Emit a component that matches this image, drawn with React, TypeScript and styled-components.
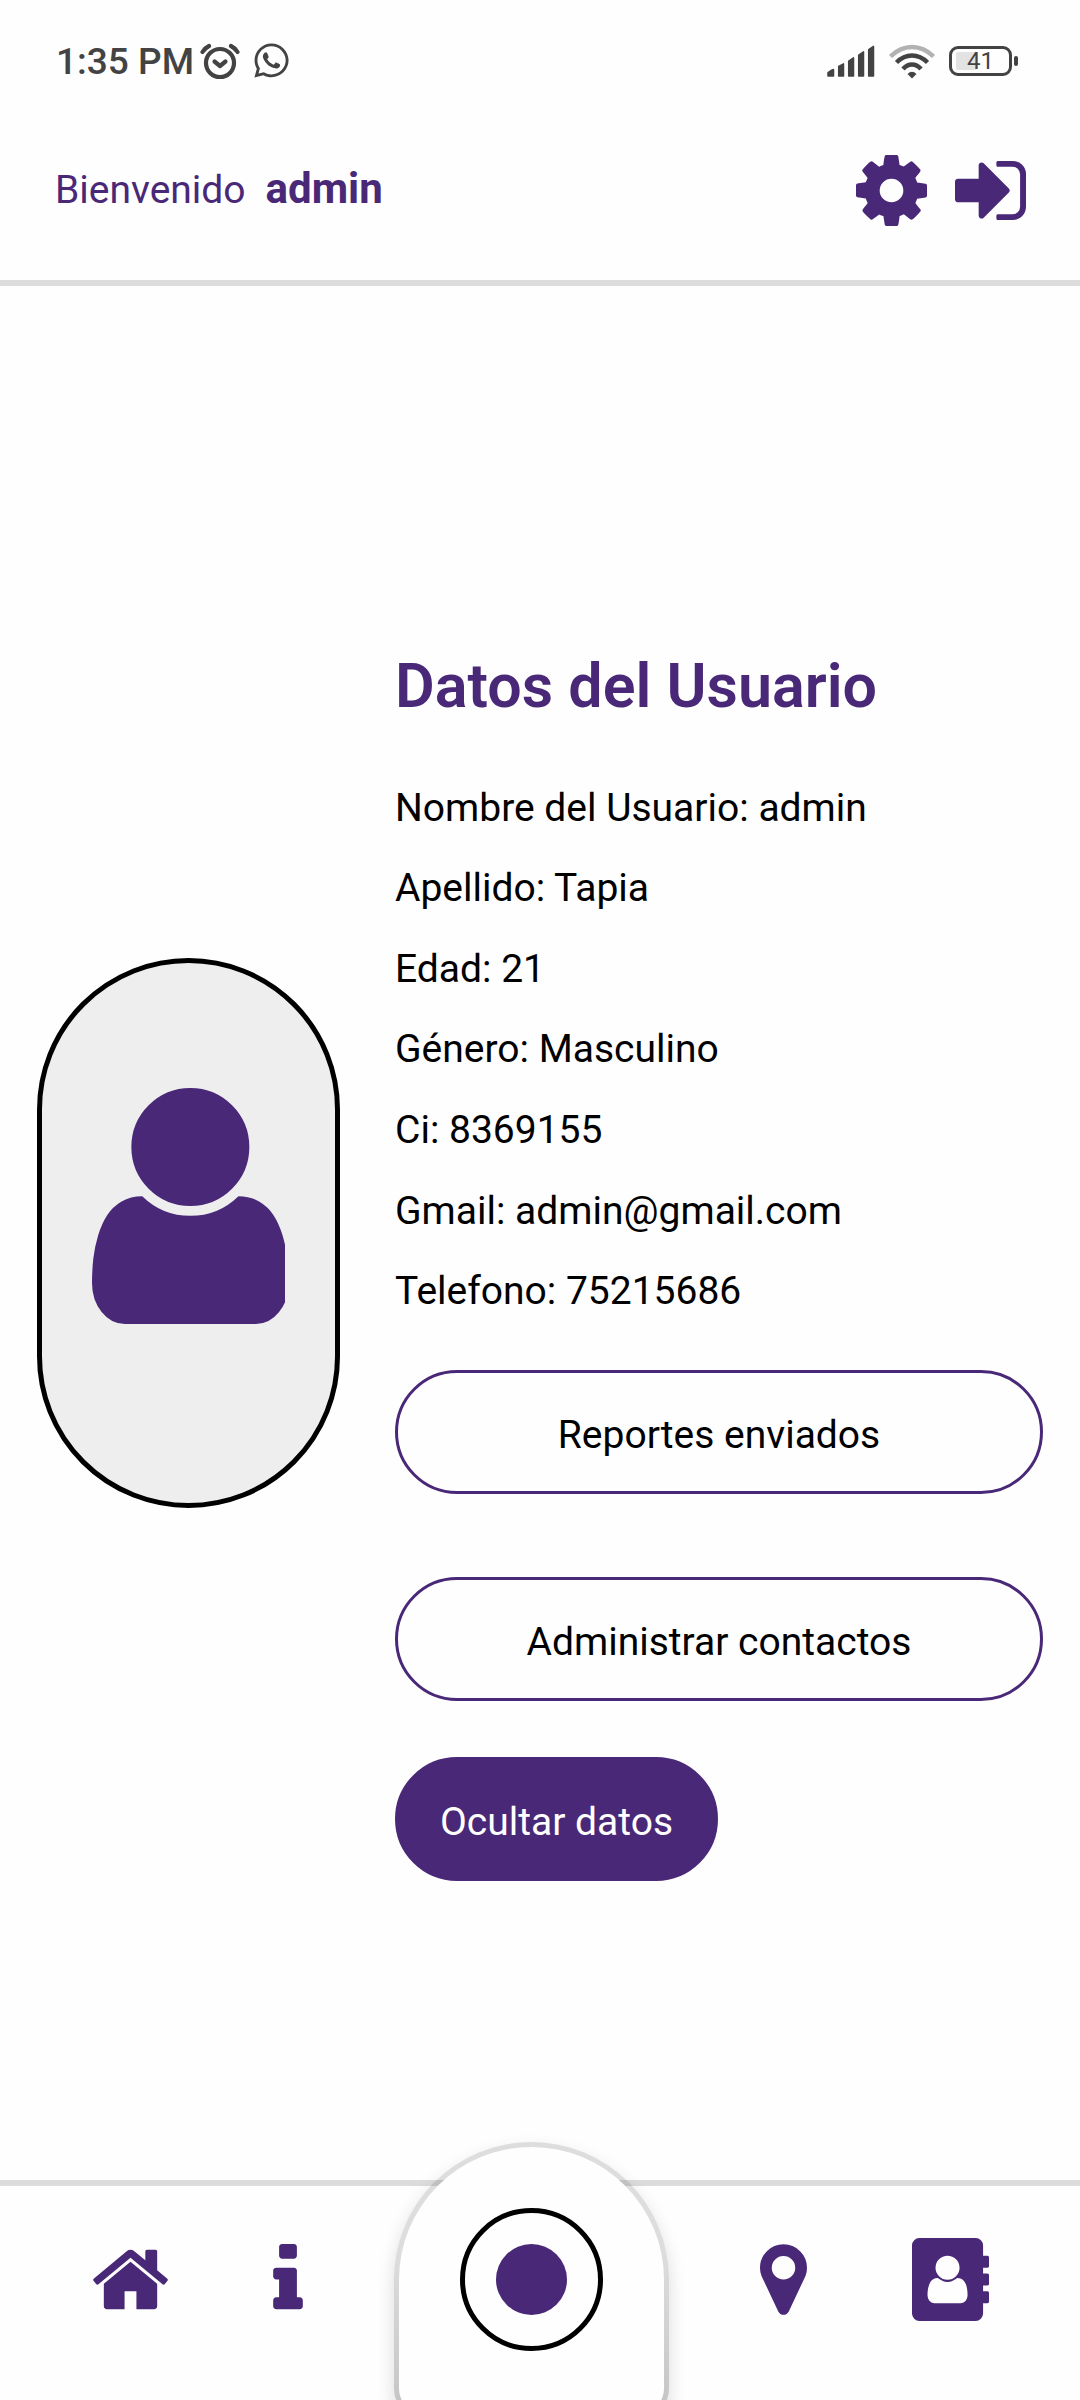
import React from "react";
import styled, { createGlobalStyle } from "styled-components";
import { FaWhatsapp } from "react-icons/fa";

const PURPLE = "#4a2878";
const STATUS = "#434343";
const LINE = "#dcdcdc";

const GlobalStyle = createGlobalStyle`
  *, *::before, *::after { box-sizing: border-box; }
  body {
    margin: 0;
    background: #fefefe;
    font-family: Roboto, "Liberation Sans", sans-serif;
    color: #000;
  }
`;

const Screen = styled.div`
  min-height: 100vh;
  display: flex;
  flex-direction: column;
  overflow: hidden;
`;

const StatusBar = styled.div`
  display: flex;
  align-items: center;
  justify-content: space-between;
  height: 101px;
  padding: 20px 62px 0 56px;
  color: ${STATUS};
`;

const StatusGroup = styled.div<{ $gap: number }>`
  display: flex;
  align-items: center;
  gap: ${(p) => p.$gap}px;

  svg { display: block; }
`;

const Clock = styled.span`
  font-size: 37px;
  font-weight: 500;
  line-height: 40px;
  padding-top: 3px;
  margin-right: -6px;
`;

const Battery = styled.div`
  display: flex;
  align-items: center;
  gap: 2px;

  &::after {
    content: "";
    width: 4px;
    height: 10px;
    border-radius: 2px;
    background: ${STATUS};
  }
`;

const BatteryBody = styled.div<{ $level: number }>`
  width: 63px;
  height: 30px;
  padding: 3px 4px;
  border: 3px solid ${STATUS};
  border-radius: 9px;
  background: linear-gradient(#e3e3e3, #e3e3e3) content-box left / ${(p) => p.$level}% 100% no-repeat;
  font-size: 24px;
  line-height: 19px;
  text-align: center;
`;

const Header = styled.header`
  display: flex;
  align-items: center;
  justify-content: space-between;
  height: 185px;
  padding: 0 54px 0 55px;
  border-bottom: 6px solid ${LINE};
  color: ${PURPLE};
`;

const Greeting = styled.p`
  display: flex;
  align-items: baseline;
  gap: 20px;
  margin: 0;
  padding-bottom: 2px;
  font-size: 39px;
  line-height: 48px;
`;

const UserName = styled.strong`
  font-size: 42px;
  font-weight: 700;
`;

const HeaderActions = styled.div`
  display: flex;
  gap: 28px;
`;

const IconButton = styled.button`
  display: flex;
  padding: 0;
  border: 0;
  background: none;
  color: ${PURPLE};
  cursor: pointer;
`;

const Main = styled.main`
  flex: 1;
  display: flex;
  align-items: center;
  gap: 55px;
  padding: 0 37px;
`;

const Avatar = styled.div`
  flex: 0 0 303px;
  height: 550px;
  padding: 125px 0 0 50px;
  border: 5px solid #000;
  border-radius: 152px;
  background: #eee;
  color: ${PURPLE};

  svg { display: block; }
`;

const Profile = styled.section`
  flex: 1;
  display: flex;
  flex-direction: column;
  align-items: flex-start;
  padding-top: 64px;
`;

const Title = styled.h1`
  margin: 0 0 46px;
  font-size: 61px;
  font-weight: 600;
  line-height: 72px;
  color: ${PURPLE};
`;

const DataList = styled.ul`
  display: grid;
  grid-auto-rows: 1fr;
  align-items: center;
  min-height: 564px;
  margin: 0 0 38px;
  padding: 0;
  list-style: none;
  font-size: 39px;
  line-height: 48px;
`;

const PillButton = styled.button<{ $filled?: boolean }>`
  align-self: ${(p) => (p.$filled ? "flex-start" : "stretch")};
  height: 124px;
  padding: 6px 42px 0;
  border: 3px solid ${PURPLE};
  border-radius: 62px;
  background: ${(p) => (p.$filled ? PURPLE : "transparent")};
  color: ${(p) => (p.$filled ? "#fff" : "#000")};
  font: 400 39px/48px Roboto, "Liberation Sans", sans-serif;
  cursor: pointer;
`;

const ButtonStack = styled.div`
  align-self: stretch;
  display: flex;
  flex-direction: column;
  gap: 83px;
  margin-bottom: 56px;
`;

const NavBar = styled.nav`
  display: flex;
  align-items: center;
  justify-content: space-evenly;
  height: 220px;
  padding: 0 0 27px 2px;
  border-top: 6px solid ${LINE};
`;

const NavLink = styled.a<{ $width: number; $align?: string }>`
  display: flex;
  justify-content: ${(p) => p.$align ?? "center"};
  width: ${(p) => p.$width}px;
  color: ${PURPLE};
`;

const CenterTab = styled.div`
  flex: none;
  width: 275px;
  height: 275px;
  padding: 5px;
  border-radius: 138px 138px 28px 28px;
  background: linear-gradient(rgba(0, 0, 0, 0.13) 40%, rgba(0, 0, 0, 0.23));
  box-shadow: 0 8px 18px rgba(0, 0, 0, 0.14);
`;

const CenterTabFace = styled.div`
  display: flex;
  align-items: center;
  justify-content: center;
  height: 100%;
  border-radius: 133px 133px 23px 23px;
  background: #fefefe;
`;

const RecordButton = styled.button`
  display: flex;
  align-items: center;
  justify-content: center;
  width: 143px;
  height: 143px;
  padding: 0;
  border: 5px solid #000;
  border-radius: 50%;
  background: transparent;
  cursor: pointer;

  &::before {
    content: "";
    width: 71px;
    height: 71px;
    border-radius: 50%;
    background: ${PURPLE};
  }
`;

/* Solid glyphs share a 1792-unit em; `left` and `span` crop the side bearings. */
interface GlyphProps {
  left: number;
  span: number;
  width: number;
  height?: number;
  top?: number;
  rise?: number;
  children: React.ReactNode;
}

function Glyph({ left, span, width, height = 83, top = 0, rise = 1792, children }: GlyphProps) {
  return (
    <svg width={width} height={height} viewBox={`${left} ${top} ${span} ${rise}`} fill="currentColor" aria-hidden="true">
      {children}
    </svg>
  );
}

const CogIcon = () => (
  <Glyph left={0} span={1536} width={71}>
    <path d="M1024 896q0-106-75-181t-181-75-181 75-75 181 75 181 181 75 181-75 75-181zm512-109v222q0 12-8 23t-20 13l-185 28q-19 54-39 91 35 50 107 138 10 12 10 25t-9 23q-27 37-99 108t-94 71q-12 0-26-9l-138-108q-44 23-91 38-16 136-29 186-7 28-36 28h-222q-14 0-24.500-8.500t-11.500-21.500l-28-184q-49-16-90-37l-141 107q-10 9-25 9-14 0-25-11-126-114-165-168-7-10-7-23 0-12 8-23 15-21 51-66.500t54-70.500q-27-50-41-99l-183-27q-13-2-21-12.500t-8-23.500v-222q0-12 8-23t19-13l186-28q14-46 39-92-40-57-107-138-10-12-10-24 0-10 9-23 26-36 98.500-107.500t94.500-71.500q13 0 26 10l138 107q44-23 91-38 16-136 29-186 7-28 36-28h222q14 0 24.500 8.500t11.500 21.500l28 184q49 16 90 37l142-107q9-9 24-9 13 0 25 10 129 119 165 170 7 8 7 22 0 12-8 23-15 21-51 66.500t-54 70.500q26 50 41 98l183 28q13 2 21 12.500t8 23.500z" />
  </Glyph>
);

const SignInIcon = () => (
  <Glyph left={128} span={1536} width={71}>
    <path d="M1312 896q0 26-19 45l-544 544q-19 19-45 19t-45-19-19-45v-288h-448q-26 0-45-19t-19-45v-384q0-26 19-45t45-19h448v-288q0-26 19-45t45-19 45 19l544 544q19 19 19 45zm352-352v704q0 119-84.500 203.500t-203.500 84.500h-320q-13 0-22.500-9.500t-9.500-22.500q0-4-1-20t-.5-26.500 3-23.500 10-19.500 20.500-6.500h320q66 0 113-47t47-113v-704q0-66-47-113t-113-47h-312l-11.500-1-11.500-3-8-5.500-7-9-2-13.500q0-4-1-20t-.5-26.500 3-23.500 10-19.500 20.500-6.500h320q119 0 203.500 84.500t84.500 203.500z" />
  </Glyph>
);

const UserIcon = () => (
  <Glyph left={256} span={1256} width={193} top={128} rise={1536} height={236}>
    <path d="M1536 1399q0 109-62.500 187t-150.500 78h-854q-88 0-150.500-78t-62.500-187q0-85 8.500-160.500t31.500-152 58.500-131 94-89 134.500-34.500q131 128 313 128t313-128q76 0 134.500 34.500t94 89 58.500 131 31.500 152 8.500 160.500zm-256-887q0 159-112.500 271.500t-271.500 112.500-271.500-112.500-112.500-271.500 112.500-271.500 271.500-112.500 271.500 112.500 112.500 271.500z" />
  </Glyph>
);

const HomeIcon = () => (
  <Glyph left={89} span={1614} width={75}>
    <path d="M1472 992v480q0 26-19 45t-45 19h-384v-384h-256v384h-384q-26 0-45-19t-19-45v-480q0-1 .5-3t.5-3l575-474 575 474q1 2 1 6zm223-69l-62 74q-8 9-21 11h-3q-13 0-21-7l-692-577-692 577q-12 8-24 7-13-2-21-11l-62-74q-8-10-7-23.500t11-21.500l719-599q32-26 76-26t76 26l244 204v-195q0-14 9-23t23-9h192q14 0 23 9t9 23v408l219 182q10 8 11 21.500t-7 23.500z" />
  </Glyph>
);

const InfoIcon = () => (
  <Glyph left={576} span={640} width={30}>
    <path d="M1216 1344v128q0 26-19 45t-45 19h-512q-26 0-45-19t-19-45v-128q0-26 19-45t45-19h64v-384h-64q-26 0-45-19t-19-45v-128q0-26 19-45t45-19h384q26 0 45 19t19 45v576h64q26 0 45 19t19 45zm-128-1152v192q0 26-19 45t-45 19h-256q-26 0-45-19t-19-45v-192q0-26 19-45t45-19h256q26 0 45 19t19 45z" />
  </Glyph>
);

const MarkerIcon = () => (
  <Glyph left={384} span={1024} width={47}>
    <path d="M1152 640q0-106-75-181t-181-75-181 75-75 181 75 181 181 75 181-75 75-181zm256 0q0 109-33 179l-364 774q-16 33-47.500 52t-67.500 19-67.500-19-46.500-52l-365-774q-33-70-33-179 0-212 150-362t362-150 362 150 150 362z" />
  </Glyph>
);

const AddressBookIcon = () => (
  <Glyph left={0} span={1664} width={77}>
    <path d="M1664 608q0 13-9.500 22.500t-22.500 9.500h-96v128h96q13 0 22.500 9.500t9.500 22.500v192q0 13-9.500 22.500t-22.500 9.500h-96v128h96q13 0 22.500 9.500t9.500 22.500v192q0 13-9.500 22.500t-22.500 9.500h-96v224q0 66-47 113t-113 47h-1216q-66 0-113-47t-47-113v-1472q0-66 47-113t113-47h1216q66 0 113 47t47 113v224h96q13 0 22.500 9.500t9.500 22.500v192z" />
    <path
      fill="#fefefe"
      d="M1028 644q0 107-76.500 183t-183.500 76-183.500-76-76.500-183q0-108 76.500-184t183.500-76 183.500 76 76.500 184zm-48 220q46 0 82.500 17t60 47.500 39.500 67 24 81 11.500 82.500 3.500 79q0 67-39.500 118.500t-105.500 51.500h-576q-66 0-105.500-51.500t-39.500-118.500q0-48 4.500-93.500t18.500-98.500 36.500-91.500 63-64.500 93.500-26h5q7 4 32 19.500t35.500 21 33 17 37 16 35 9 39.500 4.500 39.500-4.500 35-9 37-16 33-17 35.500-21 32-19.500z"
    />
  </Glyph>
);

const AlarmIcon = () => (
  <svg width="40" height="38" viewBox="0 0 40 38" fill="none" stroke={STATUS} strokeWidth="4.2" strokeLinecap="round" strokeLinejoin="round" aria-hidden="true">
    <circle cx="20" cy="21" r="14" />
    <path d="M14.500 19.500 20 24l5.500-4.500" />
    <path d="M2.500 10q2.500-4 6.500-6M37.500 10q-2.500-4-6.500-6" />
  </svg>
);

const SignalIcon = () => (
  <svg width="48" height="34" viewBox="0 0 48 34" fill={STATUS} stroke={STATUS} strokeWidth="1.500" strokeLinejoin="round" aria-hidden="true">
    <path d="M1 28.500 4 26.500l2.500-1v6.500H1zM11.700 22.500l4.800-2.700V32h-4.800zM21.700 17l4.800-3.200V32h-4.800zM31.700 11l4.800-3.200V32h-4.800zM41.700 5.500l4.800-3.200V32h-4.800z" />
  </svg>
);

const WifiIcon = () => (
  <svg width="46" height="36" viewBox="0 0 46 36" fill="none" stroke={STATUS} strokeWidth="4.500" aria-hidden="true">
    <path d="M1.500 13.500Q11 4 23 4t21.500 9.500" stroke="#b2b2b2" />
    <path d="M7.500 19.500Q14.500 12.500 23 12.500t15.500 7" />
    <path d="M14 26q4-4.500 9-4.500t9 4.500" />
    <path d="M18.500 31q4.500-4.500 9 0L23 35.500z" fill={STATUS} stroke="none" />
  </svg>
);

const userData: [string, string][] = [
  ["Nombre del Usuario", "admin"],
  ["Apellido", "Tapia"],
  ["Edad", "21"],
  ["Género", "Masculino"],
  ["Ci", "8369155"],
  ["Gmail", "admin@gmail.com"],
  ["Telefono", "75215686"],
];

export default function App() {
  return (
    <Screen>
      <GlobalStyle />
      <StatusBar>
        <StatusGroup $gap={12}>
          <Clock>1:35 PM</Clock>
          <AlarmIcon />
          <FaWhatsapp size={39} />
        </StatusGroup>
        <StatusGroup $gap={14}>
          <SignalIcon />
          <WifiIcon />
          <Battery>
            <BatteryBody $level={41}>41</BatteryBody>
          </Battery>
        </StatusGroup>
      </StatusBar>

      <Header>
        <Greeting>
          Bienvenido <UserName>admin</UserName>
        </Greeting>
        <HeaderActions>
          <IconButton type="button" aria-label="Configuración">
            <CogIcon />
          </IconButton>
          <IconButton type="button" aria-label="Salir">
            <SignInIcon />
          </IconButton>
        </HeaderActions>
      </Header>

      <Main>
        <Avatar>
          <UserIcon />
        </Avatar>
        <Profile>
          <Title>Datos del Usuario</Title>
          <DataList>
            {userData.map(([label, value]) => (
              <li key={label}>
                {label}: {value}
              </li>
            ))}
          </DataList>
          <ButtonStack>
            <PillButton type="button">Reportes enviados</PillButton>
            <PillButton type="button">Administrar contactos</PillButton>
          </ButtonStack>
          <PillButton type="button" $filled>
            Ocultar datos
          </PillButton>
        </Profile>
      </Main>

      <NavBar>
        <NavLink href="#inicio" aria-label="Inicio" $width={75}>
          <HomeIcon />
        </NavLink>
        <NavLink href="#informacion" aria-label="Información" $width={45} $align="flex-end">
          <InfoIcon />
        </NavLink>
        <CenterTab>
          <CenterTabFace>
            <RecordButton type="button" aria-label="Enviar alerta" />
          </CenterTabFace>
        </CenterTab>
        <NavLink href="#mapa" aria-label="Mapa" $width={62} $align="flex-start">
          <MarkerIcon />
        </NavLink>
        <NavLink href="#contactos" aria-label="Contactos" $width={77}>
          <AddressBookIcon />
        </NavLink>
      </NavBar>
    </Screen>
  );
}
